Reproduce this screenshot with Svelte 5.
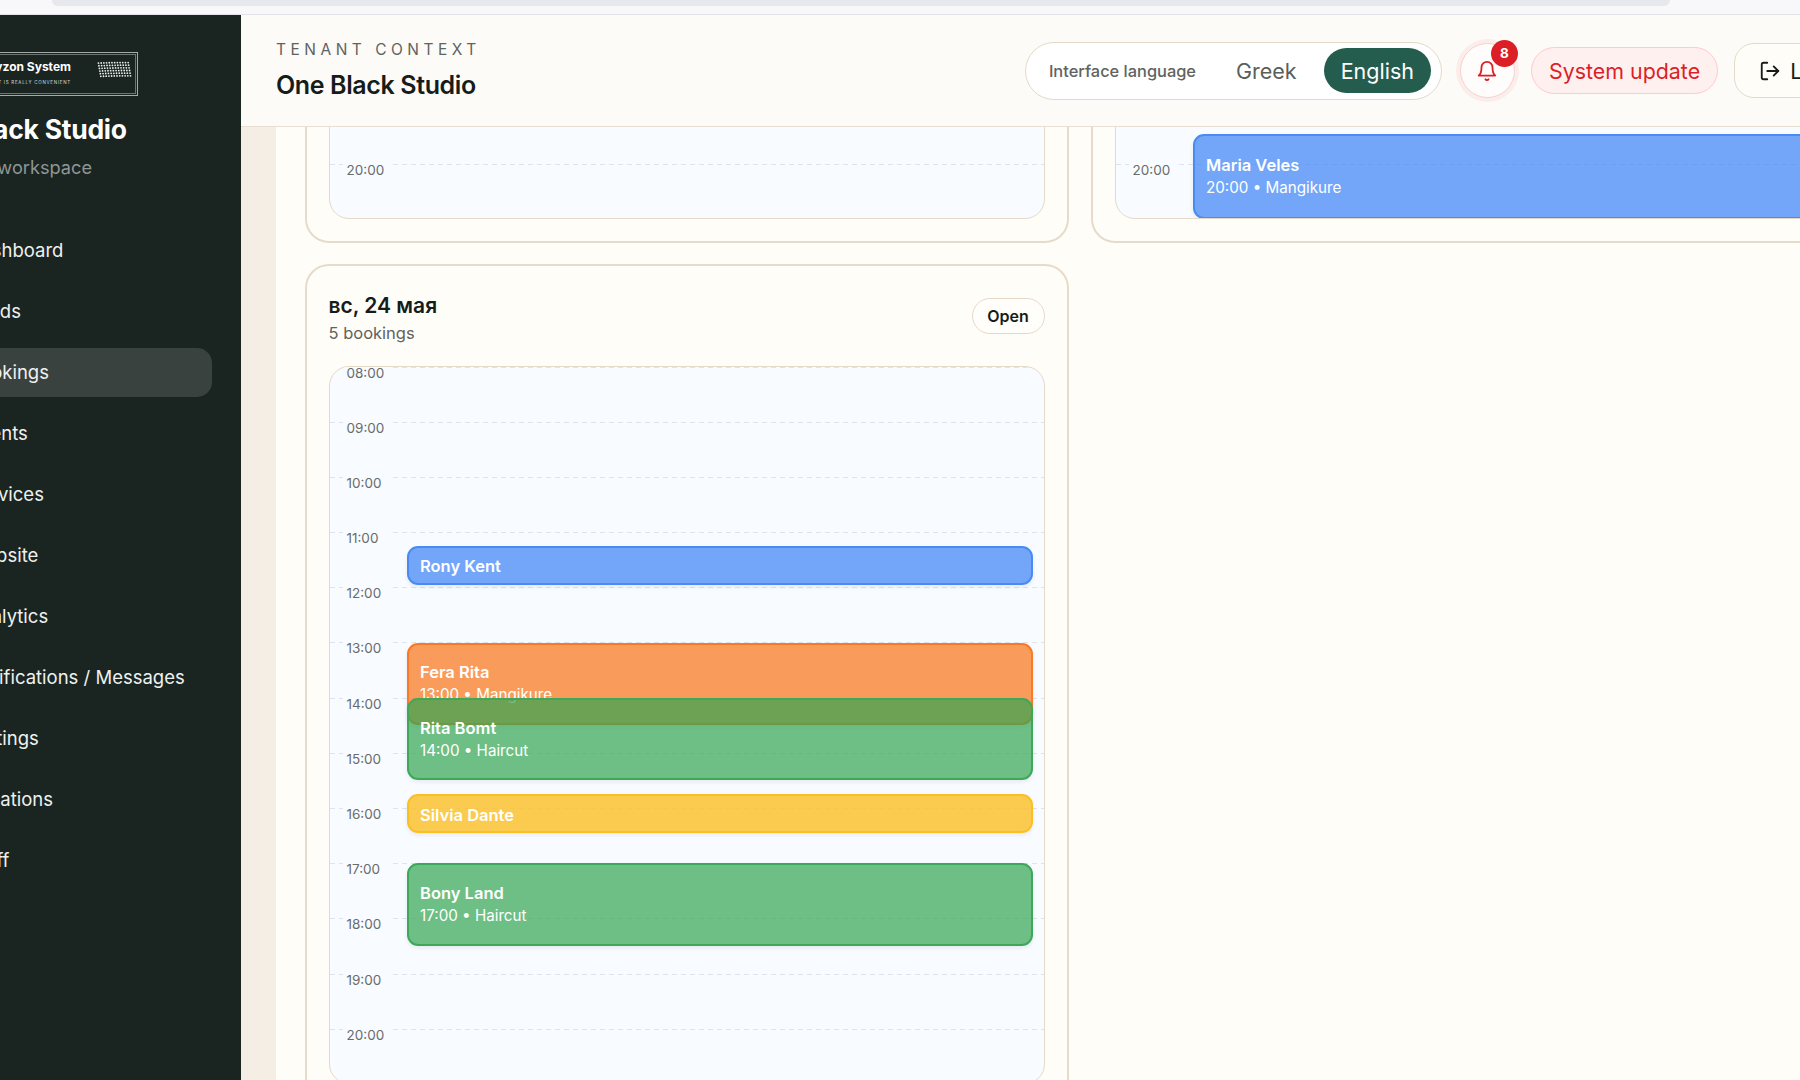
<script lang="ts">
  const nav = [
    'Dashboard', 'Leads', 'Bookings', 'Clients', 'Services', 'Website',
    'Analytics', 'Notifications / Messages', 'Settings', 'Locations', 'Staff'
  ];
  const hours = ['08:00', '09:00', '10:00', '11:00', '12:00', '13:00', '14:00', '15:00', '16:00', '17:00', '18:00', '19:00', '20:00'];
  const hourHeight = 55.2;

  // start = hours after 08:00 on the grid
  const days = [
    { title: 'сб, 23 мая', count: '4 bookings', events: [] },
    {
      title: 'вс, 24 мая', count: '4 bookings',
      events: [
        { name: 'Maria Veles', meta: '20:00 • Mangikure', start: 11.46, span: 1.54, tone: 'blue' }
      ]
    },
    {
      title: 'вс, 24 мая', count: '5 bookings',
      events: [
        { name: 'Rony Kent', start: 3.25, span: 0.7, tone: 'blue' },
        { name: 'Fera Rita', meta: '13:00 • Mangikure', start: 5, span: 1.5, tone: 'orange' },
        { name: 'Rita Bomt', meta: '14:00 • Haircut', start: 6, span: 1.5, tone: 'green' },
        { name: 'Silvia Dante', start: 7.75, span: 0.7, tone: 'yellow' },
        { name: 'Bony Land', meta: '17:00 • Haircut', start: 9, span: 1.5, tone: 'green' }
      ]
    }
  ];

  // halftone flag in the logo
  const dots: { x: number; y: number }[] = [];
  for (let r = 0; r < 6; r++) {
    for (let c = 0; c < 12; c++) {
      dots.push({ x: 1 + c * 2.85 + r * 0.5, y: 1.5 + r * 2.8 + (6 - c) * 0.12 + (c * c) * 0.006 });
    }
  }
</script>

<div class="browser-strip"><div class="address"></div></div>

<div class="shell">
  <aside class="sidebar">
    <div class="logo">
      <div class="logo-text">
        <strong>Horyzon System</strong>
        <span>IT IS REALLY CONVENIENT</span>
      </div>
      <svg class="logo-flag" viewBox="0 0 38 19" width="37" height="18" aria-hidden="true">
        {#each dots as d}
          <circle cx={d.x} cy={d.y} r="0.95" fill="#e9ecea" />
        {/each}
      </svg>
    </div>
    <h2 class="brand">One Black Studio</h2>
    <p class="brand-sub">Business workspace</p>
    <nav>
      {#each nav as item}
        <a href="#top" class="nav-item" class:active={item === 'Bookings'}>{item}</a>
      {/each}
    </nav>
  </aside>

  <div class="main">
    <header class="topbar">
      <div class="tenant">
        <div class="eyebrow">TENANT CONTEXT</div>
        <h1>One Black Studio</h1>
      </div>
      <div class="actions">
        <div class="lang">
          <span class="lang-label">Interface language</span>
          <button class="lang-btn">Greek</button>
          <button class="lang-btn on">English</button>
        </div>
        <button class="bell" aria-label="Notifications">
          <svg viewBox="0 0 24 24" width="22" height="22" fill="none" stroke="currentColor" stroke-width="2" stroke-linecap="round" stroke-linejoin="round">
            <path d="M6 8a6 6 0 0 1 12 0c0 7 3 9 3 9H3s3-2 3-9" />
            <path d="M10.3 21a1.94 1.94 0 0 0 3.4 0" />
          </svg>
          <span class="badge">8</span>
        </button>
        <button class="update">System update</button>
        <button class="logout">
          <svg viewBox="0 0 24 24" width="22" height="22" fill="none" stroke="currentColor" stroke-width="2" stroke-linecap="round" stroke-linejoin="round">
            <path d="M9 21H5a2 2 0 0 1-2-2V5a2 2 0 0 1 2-2h4" />
            <polyline points="16 17 21 12 16 7" />
            <line x1="21" y1="12" x2="9" y2="12" />
          </svg>
          Logout
        </button>
      </div>
    </header>

    <div class="scroller">
      <div class="content">
        <div class="days">
          {#each days as day}
            <section class="day">
              <div class="day-head">
                <div>
                  <h3>{day.title}</h3>
                  <p>{day.count}</p>
                </div>
                <button class="open">Open</button>
              </div>
              <div class="grid">
                {#each hours as h}
                  <div class="hour"><span class="time">{h}</span></div>
                {/each}
                {#each day.events as ev}
                  <div
                    class="event {ev.tone}"
                    style="top: {ev.start * hourHeight}px; height: {ev.span * hourHeight}px"
                  >
                    <strong>{ev.name}</strong>
                    {#if ev.meta}<span>{ev.meta}</span>{/if}
                  </div>
                {/each}
              </div>
            </section>
          {/each}
        </div>
      </div>
    </div>
  </div>
</div>

<style>
  :global(html), :global(body) {
    margin: 0;
    height: 1080px;
    overflow: hidden;
    background: #fffdf8;
  }

  * { box-sizing: border-box; }

  .browser-strip {
    height: 15px;
    background: #f8f7fa;
    border-bottom: 1px solid #e2e2e8;
  }

  .address {
    margin-left: 52px;
    width: 1618px;
    height: 6px;
    background: #e6e8ed;
    border-radius: 0 0 10px 10px;
  }

  .shell {
    display: flex;
    width: 2034px;
    height: 1065px;
    margin-left: -113px;
    font-family: Inter, "Liberation Sans", sans-serif;
    color: #151c1a;
  }

  .sidebar {
    flex: 0 0 354px;
    padding: 37px 29px 0 28px;
    background: #1a2522;
    color: #eef1ef;
  }

  .logo {
    display: flex;
    align-items: center;
    justify-content: flex-end;
    gap: 26px;
    width: 223px;
    height: 44px;
    padding-right: 3px;
    border: 1px solid #a4aaa7;
    outline: 1px solid #6d7572;
    outline-offset: -3px;
  }

  .logo-text {
    display: flex;
    flex-direction: column;
    align-items: flex-end;
    gap: 7px;
    margin-top: -1px;
    color: #fff;
  }

  .logo-text strong {
    font-size: 12px;
    line-height: 12px;
    font-weight: 700;
  }

  .logo-text span {
    font-size: 4.5px;
    line-height: 6px;
    letter-spacing: 0.16em;
    color: #d5d9d7;
  }

  .logo-flag {
    margin-top: -8px;
  }

  .brand {
    margin: 15px 0 0 -4px;
    font-size: 26.5px;
    line-height: 36px;
    font-weight: 700;
    letter-spacing: -0.01em;
    color: #fff;
  }

  .brand-sub {
    margin: 8px 0 0;
    font-size: 18.2px;
    line-height: 24px;
    color: #8f9693;
  }

  nav {
    display: flex;
    flex-direction: column;
    gap: 12px;
    margin-top: 46.5px;
  }

  .nav-item {
    display: flex;
    align-items: center;
    height: 49px;
    padding-left: 53px;
    border-radius: 15px;
    font-size: 18.5px;
    color: #eef1ef;
    text-decoration: none;
  }

  .nav-item.active {
    background: #39423f;
  }

  .main {
    flex: 1;
    min-width: 0;
    display: flex;
    flex-direction: column;
  }

  .topbar {
    flex: 0 0 112px;
    display: flex;
    align-items: center;
    justify-content: space-between;
    padding: 0 35px;
    background: #fdfbf7;
    border-bottom: 1px solid #e8dfd2;
  }

  .eyebrow {
    font-size: 15.5px;
    line-height: 18px;
    letter-spacing: 0.29em;
    color: #5f6360;
  }

  .tenant h1 {
    margin: 10px 0 0;
    font-size: 25px;
    line-height: 32px;
    font-weight: 600;
    letter-spacing: -0.015em;
  }

  .actions {
    display: flex;
    align-items: center;
    gap: 16px;
  }

  button {
    font-family: inherit;
    cursor: pointer;
  }

  .lang {
    display: flex;
    align-items: center;
    height: 58px;
    margin-right: 2px;
    padding: 0 10px 0 23px;
    background: #fff;
    border: 1.5px solid #e5d9c8;
    border-radius: 29px;
  }

  .lang-label {
    margin-right: 24px;
    font-size: 16.4px;
    font-weight: 500;
    color: #5f6360;
  }

  .lang-btn {
    height: 45px;
    padding: 0 16px;
    border: 0;
    border-radius: 23px;
    background: none;
    font-size: 21.5px;
    color: #5a5e5c;
  }

  .lang-btn.on {
    margin-left: 11px;
    padding: 0 17px;
    background: #245c4d;
    color: #fff;
  }

  .bell {
    position: relative;
    display: flex;
    align-items: center;
    justify-content: center;
    width: 55px;
    height: 55px;
    padding: 0;
    background: #fffdfb;
    border: 1.5px solid #fbcfcf;
    border-radius: 50%;
    box-shadow: 0 0 0 4px rgba(220, 38, 38, 0.06);
    color: #dc1f26;
  }

  .badge {
    position: absolute;
    top: -4px;
    right: -4px;
    width: 27px;
    height: 27px;
    border-radius: 50%;
    background: #dc1f26;
    color: #fff;
    font-size: 13.5px;
    font-weight: 700;
    line-height: 27px;
    text-align: center;
  }

  .update {
    height: 47px;
    padding: 0 17px;
    background: #fff0f0;
    border: 1.5px solid #fecaca;
    border-radius: 24px;
    color: #dc1f26;
    font-size: 21.4px;
    white-space: nowrap;
  }

  .logout {
    display: flex;
    align-items: center;
    gap: 9px;
    height: 55px;
    padding: 0 24px;
    background: #fffdf8;
    border: 1.5px solid #e5d9c8;
    border-radius: 20px;
    color: #151c1a;
    font-size: 21.5px;
  }

  .scroller {
    flex: 1;
    min-height: 0;
    overflow: hidden;
    padding-left: 35px;
    background: #f5eee4;
  }

  .content {
    height: 100%;
    overflow: hidden;
    padding-left: 29px;
    background: #fffdf8;
  }

  /* scrolled down inside the bookings list */
  .days {
    display: grid;
    grid-template-columns: 764px 764px;
    gap: 21.5px 22px;
    margin-top: -728px;
  }

  .day {
    padding: 25.5px 22.5px 22px 21.5px;
    background: #fffdf8;
    border: 2px solid #e6dbca;
    border-radius: 24px;
  }

  .day-head {
    display: flex;
    align-items: flex-start;
    justify-content: space-between;
    height: 52px;
    margin-bottom: 22px;
  }

  .day-head h3 {
    margin: 1px 0 0;
    font-size: 21px;
    line-height: 26px;
    font-weight: 600;
  }

  .day-head p {
    margin: 3px 0 0;
    font-size: 16.5px;
    line-height: 22px;
    color: #5f6360;
  }

  .open {
    width: 73px;
    height: 36px;
    margin-top: 6px;
    padding: 0;
    background: #fffefb;
    border: 1.5px solid #e5d9c8;
    border-radius: 18px;
    font-size: 16px;
    font-weight: 600;
    color: #151c1a;
  }

  .grid {
    position: relative;
    height: 718px;
    overflow: hidden;
    background: #f8fbff;
    border: 1.5px solid #e5d9c8;
    border-radius: 20px;
  }

  .hour {
    position: relative;
    height: 55.2px;
    background: repeating-linear-gradient(90deg, #dfe3ef 0 5px, transparent 5px 9px) top / 100% 1px no-repeat;
  }

  .time {
    position: absolute;
    top: -3px;
    left: 13px;
    width: 50px;
    padding-left: 4px;
    background: #f8fbff;
    font-size: 13.5px;
    line-height: 18px;
    color: #686c6b;
  }

  .event {
    position: absolute;
    left: 77px;
    right: 11px;
    display: flex;
    flex-direction: column;
    justify-content: center;
    gap: 3px;
    overflow: hidden;
    padding: 0 11.5px;
    border: 2px solid;
    border-radius: 11px;
    box-shadow: 0 2px 4px rgba(30, 40, 60, 0.08);
    color: #fff;
  }

  .event strong {
    font-size: 16.5px;
    line-height: 19px;
    font-weight: 600;
  }

  .event strong:only-child {
    margin-top: 3px;
  }

  .event span {
    font-size: 15.2px;
    line-height: 19px;
    white-space: nowrap;
  }

  .event.blue { background: rgba(59, 130, 246, 0.7); border-color: #4a8bf2; }
  .event.orange { background: rgba(249, 115, 22, 0.7); border-color: #f97a26; }
  .event.green { background: rgba(50, 165, 81, 0.7); border-color: #3ea85a; }
  .event.yellow { background: rgba(251, 191, 36, 0.8); border-color: #fbbf24; }
</style>
